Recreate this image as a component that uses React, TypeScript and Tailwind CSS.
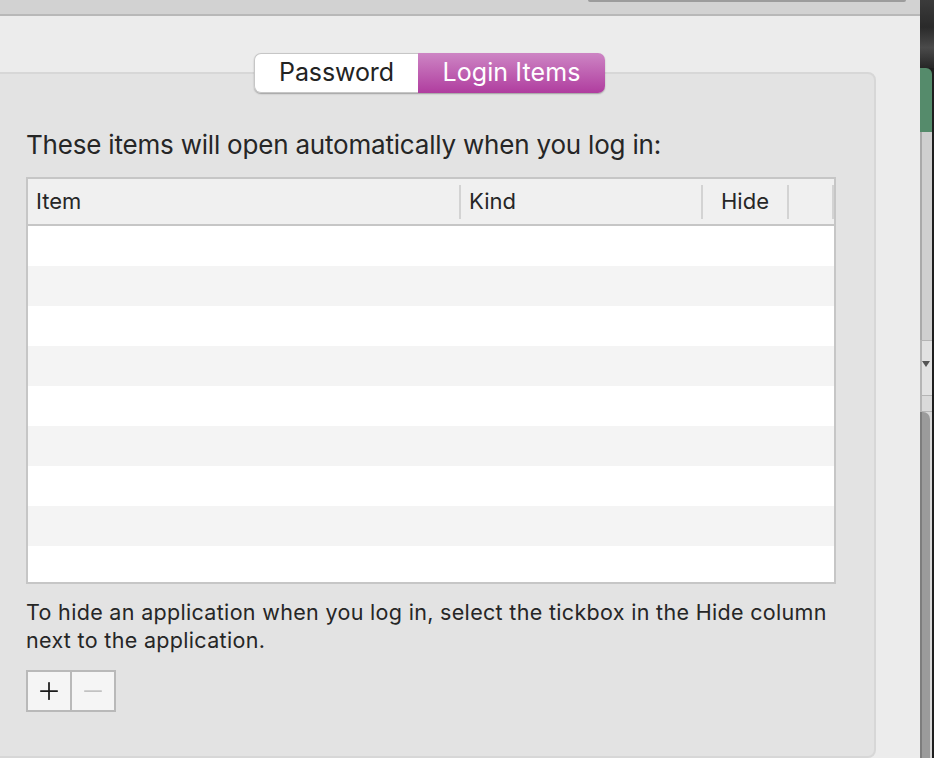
import { Plus, Minus } from "lucide-react";

const ROWS = Array.from({ length: 9 }, (_, i) => i);

function SideStrip() {
  return (
    <div className="flex w-[14px] shrink-0 flex-col bg-[#1e1e1e]">
      <div className="h-[68px] bg-[linear-gradient(180deg,#3b3b3b,#2a2a2a_40%,#4a4a4a_70%,#262626)]" />
      <div className="mr-[2px] h-[64px] rounded-tr-[6px] bg-[#558b6b]" />
      <div className="mr-[2px] h-[208px] border-l-2 border-[#a9a9a9] bg-[#cfcfcf]" />
      <div className="relative mr-[2px] h-[55px] border-l-2 border-t border-[#b5b5b5] bg-[#e2e2e2]">
        <span className="absolute left-[0px] top-[20px] h-0 w-0 border-l-[4px] border-r-[4px] border-t-[6px] border-l-transparent border-r-transparent border-t-[#555]" />
      </div>
      <div className="mr-[2px] h-[17px] border-l-2 border-y border-[#b5b5b5] bg-[#dadada]" />
      <div className="mr-[2px] flex flex-1 border-l-2 border-[#7d7d7d] bg-[#d8d8d8]">
        <div className="w-[8px] rounded-tr-[7px] bg-[#9b9b9b]" />
      </div>
    </div>
  );
}

export default function App() {
  return (
    <div
      className="flex h-[758px] w-[934px] overflow-hidden bg-[#ececec] text-[#262626]"
      style={{ fontFamily: "Inter, 'Noto Sans', 'Liberation Sans', sans-serif" }}
    >
      <div className="flex w-[920px] shrink-0 flex-col">
        {/* toolbar edge */}
        <div className="relative h-[16px] shrink-0 border-b-2 border-[#b8b8b8] bg-[#d2d2d2]">
          <div className="absolute left-[588px] top-0 h-[2px] w-[318px] rounded-b bg-[#9c9c9c]" />
        </div>

        <div className="flex flex-1 flex-col items-start bg-[#ececec] pt-[37px]">
          <div className="ml-[-17px] flex w-[893px] flex-1 flex-col">
            {/* segmented control */}
            <div className="relative z-10 mb-[-21px] flex justify-center">
              <div className="flex h-[40px] rounded-[7px] shadow-[0_1px_1.5px_rgba(0,0,0,0.3)]">
                <button className="w-[164px] rounded-l-[7px] border border-r-0 border-[#c6c6c6] bg-white text-[25px] tracking-[-0.1px] text-[#232323]">
                  Password
                </button>
                <button className="w-[187px] rounded-r-[7px] bg-[linear-gradient(180deg,#cd85c4,#b03d9f)] text-[25px] tracking-[0.1px] text-white">
                  Login Items
                </button>
              </div>
            </div>

            {/* group box */}
            <div className="flex flex-1 flex-col rounded-[8px] border-2 border-[#d7d7d7] bg-[#e3e3e3] pl-[41px] pt-[55px]">
              <p className="text-[26px] leading-[32px] tracking-[-0.2px]">
                These items will open automatically when you log in:
              </p>

              <div className="mt-[16px] w-[810px] border-2 border-[#c6c6c6] bg-white">
                <div className="flex h-[47px] items-center border-b-2 border-[#c6c6c6] bg-[#f0f0f0] text-[22px]">
                  <div className="w-[431px] pl-[8px]">Item</div>
                  <div className="h-[34px] w-[2px] bg-[#d3d3d3]" />
                  <div className="w-[240px] pl-[8px]">Kind</div>
                  <div className="h-[34px] w-[2px] bg-[#d3d3d3]" />
                  <div className="w-[84px] text-center">Hide</div>
                  <div className="h-[34px] w-[2px] bg-[#d3d3d3]" />
                  <div className="w-[43px]" />
                  <div className="h-[34px] w-[2px] bg-[#d3d3d3]" />
                </div>
                <div className="h-[356px] overflow-hidden">
                  {ROWS.map((r) => (
                    <div key={r} className={r % 2 === 0 ? "h-[40px] bg-white" : "h-[40px] bg-[#f4f4f4]"} />
                  ))}
                </div>
              </div>

              <p className="mt-[14px] whitespace-nowrap text-[21.5px] leading-[28px] tracking-[0.32px]">
                To hide an application when you log in, select the tickbox in the Hide column
                <br />
                next to the application.
              </p>

              <div className="mt-[16px] flex h-[42px] w-[90px] border-2 border-[#b9b9b9] bg-[#f5f5f5]">
                <div className="flex w-[44px] items-center justify-center border-r-2 border-[#b9b9b9]">
                  <Plus size={28} strokeWidth={1.5} className="text-[#1a1a1a]" />
                </div>
                <div className="flex flex-1 items-center justify-center">
                  <Minus size={28} strokeWidth={1.5} className="text-[#c2c2c2]" />
                </div>
              </div>
            </div>
          </div>
        </div>
      </div>
      <SideStrip />
    </div>
  );
}
